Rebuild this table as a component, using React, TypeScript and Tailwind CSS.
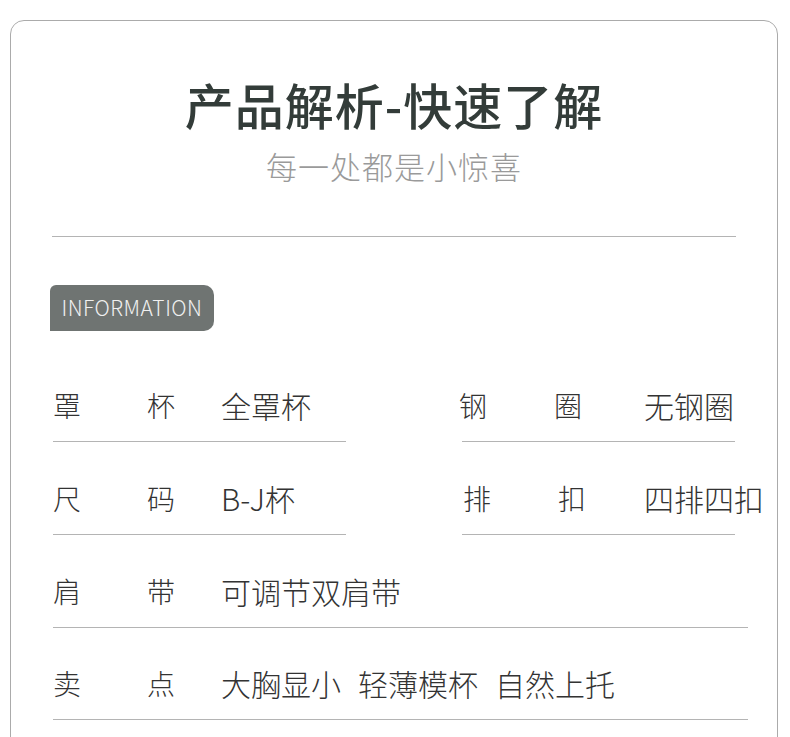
import React from 'react';

const font = { fontFamily: '"Noto Sans CJK SC", "Noto Sans", sans-serif' };

function Cell({ a, b, value, aw, bw, width }: { a: string; b: string; value: React.ReactNode; aw: string; bw: string; width: string }) {
  return (
    <div className={`${width} flex flex-col`}>
      <div className="flex items-center h-[34px] text-[28px] leading-none font-light text-[#333] whitespace-nowrap">
        <span className={`${aw} shrink-0`}>{a}</span>
        <span className={`${bw} shrink-0`}>{b}</span>
        <span className="text-[30px] shrink-0">{value}</span>
      </div>
      <div className="w-full h-px bg-[#b4b4b4] mt-[19px]" />
    </div>
  );
}

export default function App() {
  return (
    <div className="w-[790px] h-[737px] overflow-hidden bg-white" style={font}>
      <div className="ml-[10px] mt-[20px] w-[768px] h-[760px] border border-[#ababab] rounded-[14px]">
        {/* Header */}
        <div className="flex flex-col items-center pt-[58px]">
          <h1 className="text-[49px] leading-none font-medium text-[#333c39] tracking-[1px]">产品解析-快速了解</h1>
          <p className="mt-[22px] text-[31px] leading-none font-light text-[#9a9a9a] tracking-[1px]">每一处都是小惊喜</p>
        </div>

        <div className="mx-[41px] mt-[55px] h-px bg-[#b4b4b4]" />

        {/* Badge */}
        <div className="ml-[39px] mt-[48px] w-[164px] h-[46px] bg-[#6f7472] rounded-tl-[6px] rounded-r-[10px] flex items-center justify-center">
          <span className="text-[21px] font-light text-[#f0f0f0] tracking-[0.5px]">INFORMATION</span>
        </div>

        {/* Rows */}
        <div className="ml-[42px] mt-[57px] flex flex-col">
          <div className="flex">
            <Cell a="罩" b="杯" value="全罩杯" aw="w-[94px]" bw="w-[74px]" width="w-[293px]" />
            <div className="ml-[116px]">
              <Cell a="钢" b="圈" value="无钢圈" aw="w-[95px] -ml-[3px]" bw="w-[90px]" width="w-[273px]" />
            </div>
          </div>
          <div className="flex mt-[39px]">
            <Cell a="尺" b="码" value="B-J杯" aw="w-[94px]" bw="w-[74px]" width="w-[293px]" />
            <div className="ml-[116px]">
              <Cell a="排" b="扣" value="四排四扣" aw="w-[95px] ml-[1px]" bw="w-[86px]" width="w-[273px]" />
            </div>
          </div>
          <div className="flex mt-[39px]">
            <Cell a="肩" b="带" value="可调节双肩带" aw="w-[94px]" bw="w-[74px]" width="w-[695px]" />
          </div>
          <div className="flex mt-[38px]">
            <Cell
              a="卖"
              b="点"
              value={
                <span className="flex gap-[17px]">
                  <span>大胸显小</span>
                  <span>轻薄模杯</span>
                  <span>自然上托</span>
                </span>
              }
              aw="w-[94px]"
              bw="w-[74px]"
              width="w-[695px]"
            />
          </div>
        </div>
      </div>
    </div>
  );
}
